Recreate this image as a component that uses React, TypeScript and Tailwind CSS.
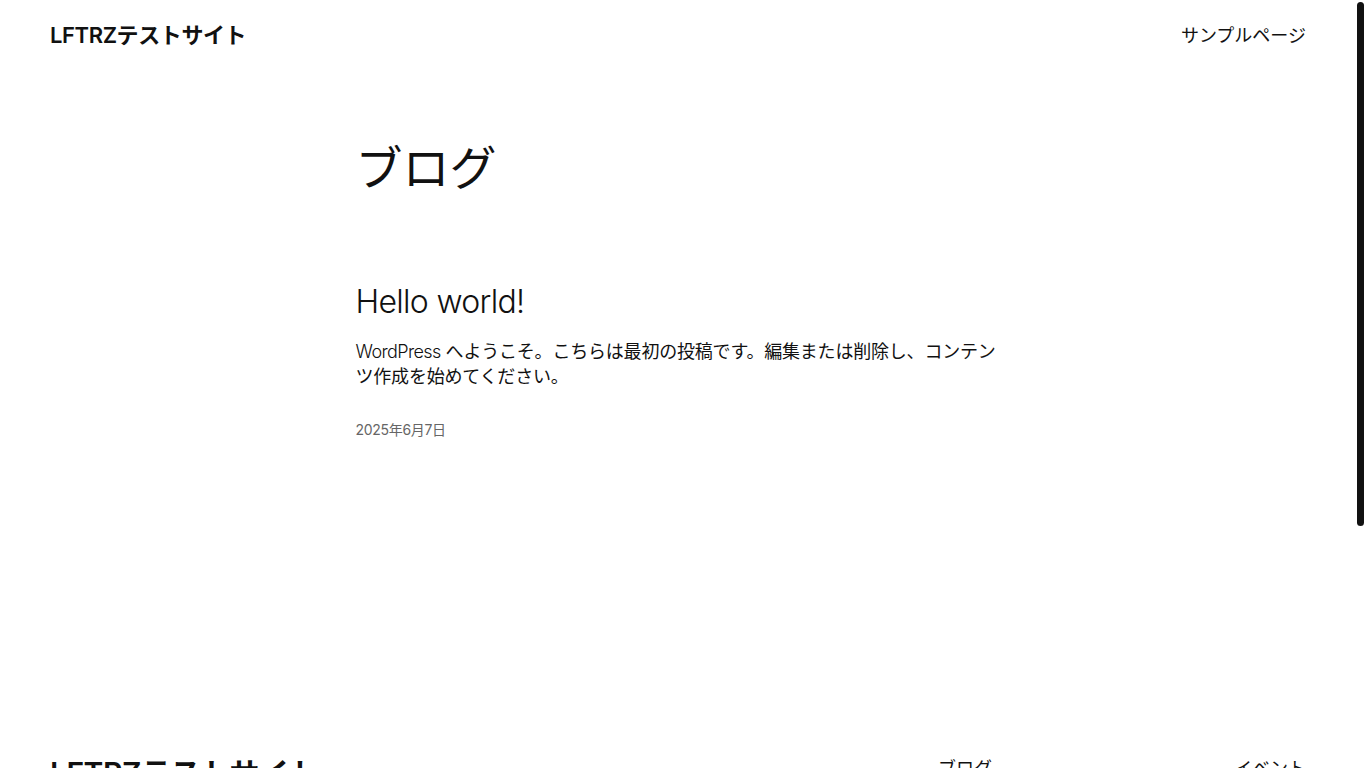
const font = '[font-family:Inter,"Noto_Sans_CJK_JP",sans-serif]'

function Header() {
  return (
    <header className="flex h-[70px] items-center justify-between px-[50px]">
      <a className="text-[22px] font-semibold tracking-[-0.4px] text-[#111]">LFTRZテストサイト</a>
      <nav>
        <a className="text-[18px] text-[#111]">サンプルページ</a>
      </nav>
    </header>
  )
}

function Post() {
  return (
    <article className="flex flex-col">
      <h2 className="text-[32px] font-light leading-[1.2] tracking-[-0.7px] text-[#111]">Hello world!</h2>
      <p className="mt-[17px] text-[18px] leading-[25px] tracking-[-0.2px] text-[#111]">
        <span className="font-light tracking-[-0.6px]">WordPress</span> へようこそ。こちらは最初の投稿です。編集または削除し、コンテンツ作成を始めてください。
      </p>
      <time className="mt-[31px] text-[14px] leading-[20px] tracking-[-0.3px] text-[#666]">2025年6月7日</time>
    </article>
  )
}

function FooterNav({ items }: { items: string[] }) {
  return (
    <ul className="mt-[4px] flex flex-col gap-[10px] text-[18px] text-[#111]">
      {items.map((item) => (
        <li key={item}>{item}</li>
      ))}
    </ul>
  )
}

function Footer() {
  return (
    <footer className="px-[50px] pt-[11px] pb-[60px]">
      <div className="flex items-start justify-between">
        <div className="text-[30px] font-semibold tracking-[-0.5px] text-[#111]">LFTRZテストサイト</div>
        <div className="flex w-[368px] justify-between">
          <FooterNav items={['ブログ', '概要', 'FAQ', '作家']} />
          <FooterNav items={['イベント', 'ショップ', 'パターン', 'テーマ']} />
        </div>
      </div>
      <div className="mt-[60px] border-t border-[#ddd] pt-[24px] text-[14px] text-[#111]">
        Twenty Twenty-Five で設計
      </div>
    </footer>
  )
}

export default function App() {
  return (
    <div className={`flex h-screen overflow-hidden bg-white ${font}`}>
      <div className="flex-1 overflow-hidden">
        <Header />
        <main className="mx-auto w-[645px] pt-[70px] pb-[300px]">
          <h1 className="text-[47px] leading-[1.2] text-[#111]">ブログ</h1>
          <div className="mt-[87px]">
            <Post />
          </div>
        </main>
        <Footer />
      </div>
      <div className="w-[10px] shrink-0 bg-white">
        <div className="ml-[1px] mt-[2px] h-[524px] w-[7px] rounded-full bg-[#111]" />
      </div>
    </div>
  )
}
